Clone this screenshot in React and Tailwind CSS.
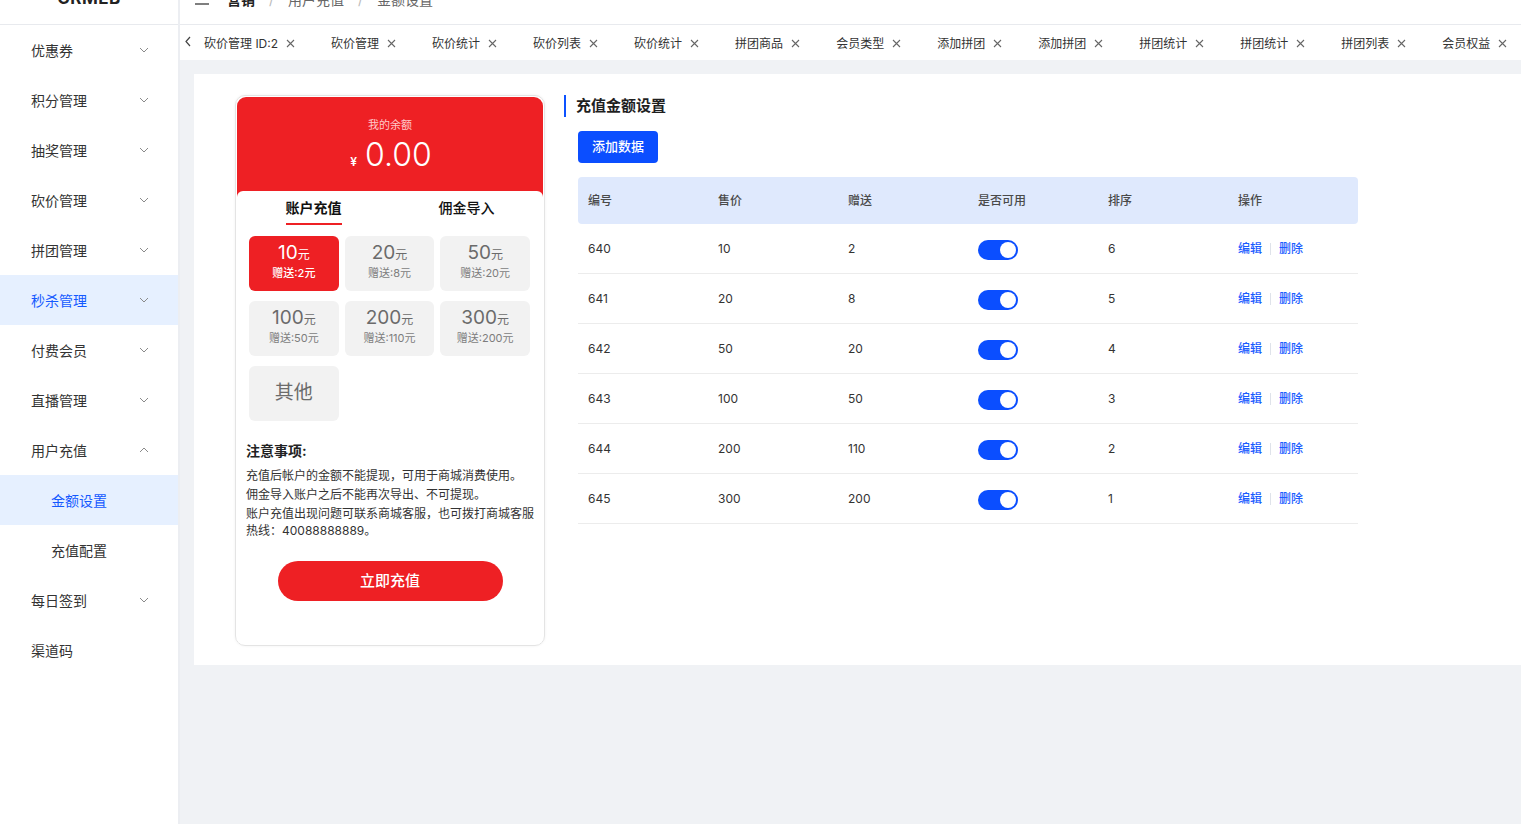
import React from 'react';

const menu = [
  { t: '优惠券', c: 'down' },
  { t: '积分管理', c: 'down' },
  { t: '抽奖管理', c: 'down' },
  { t: '砍价管理', c: 'down' },
  { t: '拼团管理', c: 'down' },
  { t: '秒杀管理', c: 'down', active: true },
  { t: '付费会员', c: 'down' },
  { t: '直播管理', c: 'down' },
  { t: '用户充值', c: 'up' },
  { t: '金额设置', sub: true, active: true },
  { t: '充值配置', sub: true },
  { t: '每日签到', c: 'down' },
  { t: '渠道码' },
];

const tabs = ['砍价管理', '砍价统计', '砍价列表', '砍价统计', '拼团商品', '会员类型', '添加拼团', '添加拼团', '拼团统计', '拼团统计', '拼团列表', '会员权益'];

const amounts = [
  { n: '10', g: '2', sel: true },
  { n: '20', g: '8' },
  { n: '50', g: '20' },
  { n: '100', g: '50' },
  { n: '200', g: '110' },
  { n: '300', g: '200' },
];

const rows = [
  ['640', '10', '2', '6'],
  ['641', '20', '8', '5'],
  ['642', '50', '20', '4'],
  ['643', '100', '50', '3'],
  ['644', '200', '110', '2'],
  ['645', '300', '200', '1'],
];

function Chevron({ up }) {
  return (
    <svg width="10" height="6" viewBox="0 0 10 6" className="text-[#8a8a8a]">
      <polyline points={up ? '1,5 5,1 9,5' : '1,1 5,5 9,1'} fill="none" stroke="currentColor" strokeWidth="1" />
    </svg>
  );
}

function Close() {
  return (
    <svg width="9" height="9" viewBox="0 0 9 9" className="text-[#666] shrink-0">
      <path d="M1 1 L8 8 M8 1 L1 8" stroke="currentColor" strokeWidth="1.1" />
    </svg>
  );
}

export default function App() {
  return (
    <div className="w-[1521px] h-[824px] overflow-hidden flex bg-[#f0f2f5] font-['Inter','Noto_Sans_CJK_SC',sans-serif] text-[#333]">
      {/* Sidebar */}
      <aside className="w-[180px] shrink-0 bg-white border-r-2 border-[#eceef2] flex flex-col">
        <div className="h-[51px] -mt-[26px] shrink-0 border-b border-[#e8eaee] flex items-center justify-center text-[17px] font-bold tracking-wide text-[#222]">
          CRMEB
        </div>
        {menu.map((m, i) => (
          <div
            key={i}
            className={`h-[50px] shrink-0 flex items-center justify-between text-[14px] ${m.sub ? 'pl-[51px]' : 'pl-[31px]'} pr-[29px] ${m.active ? 'bg-[#e6f0ff] text-[#1459ff]' : 'text-[#333]'}`}
          >
            <span>{m.t}</span>
            {m.c && <Chevron up={m.c === 'up'} />}
          </div>
        ))}
      </aside>

      {/* Main */}
      <div className="flex-1 min-w-0 flex flex-col">
        <header className="h-[51px] -mt-[26px] shrink-0 bg-white border-b border-[#e8eaee] flex items-center pl-[15px] text-[14px]">
          <svg width="14" height="12" viewBox="0 0 14 12" className="text-[#555] mr-[18px]">
            <path d="M0 1 H14 M4 6 H14 M0 11 H14" stroke="currentColor" strokeWidth="1.4" />
          </svg>
          <span className="font-semibold text-[#222]">营销</span>
          <span className="mx-[14px] text-[#bbb]">/</span>
          <span className="text-[#666]">用户充值</span>
          <span className="mx-[14px] text-[#bbb]">/</span>
          <span className="text-[#666]">金额设置</span>
        </header>

        <div className="h-[35px] shrink-0 bg-white flex items-center pt-[2px] overflow-hidden whitespace-nowrap text-[12px] text-[#333]">
          <svg width="8" height="11" viewBox="0 0 8 11" className="ml-[4px] mb-[4px] shrink-0 text-[#444]">
            <polyline points="6,1 2,5.5 6,10" fill="none" stroke="currentColor" strokeWidth="1.2" />
          </svg>
          <div className="flex items-center gap-[8px] pl-[12px] pr-[18px] shrink-0">
            <span>砍价管理 ID:2</span>
            <Close />
          </div>
          {tabs.map((t, i) => (
            <div key={i} className="flex items-center gap-[8px] px-[18px] shrink-0">
              <span>{t}</span>
              <Close />
            </div>
          ))}
        </div>

        <main className="flex-1 pt-[14px] pl-[14px]">
          <div className="bg-white flex pt-[21px] pl-[41px] pb-[19px]">
            {/* Phone preview */}
            <div className="w-[310px] h-[551px] shrink-0 rounded-[10px] border border-[#e4e4e4] shadow-[0_0_3px_rgba(0,0,0,0.06)] p-px overflow-hidden flex flex-col">
              <div className="h-[100px] shrink-0 bg-[#ee2024] rounded-t-[9px] flex flex-col items-center pt-[20px]">
                <div className="text-[11px] leading-[16px] text-[#ffc9c9]">我的余额</div>
                <div className="flex items-baseline text-white mt-[5px] pl-[2px]">
                  <span className="text-[12px] mr-[8px] font-semibold">¥</span>
                  <span className="text-[32px] leading-[34px] font-light">0.00</span>
                </div>
              </div>
              <div className="-mt-[6px] bg-white rounded-t-[6px] flex-1 flex flex-col">
                <div className="flex pt-[7px]">
                  <div className="flex-1 flex flex-col items-center">
                    <span className="text-[14px] leading-[20px] font-bold text-[#111]">账户充值</span>
                    <span className="mt-[5px] w-[56px] h-[2px] bg-[#ee2024]" />
                  </div>
                  <div className="flex-1 flex flex-col items-center">
                    <span className="text-[14px] leading-[20px] font-medium text-[#111]">佣金导入</span>
                  </div>
                </div>
                <div className="grid grid-cols-3 gap-x-[6px] gap-y-[10px] pl-[12px] pr-[13px] mt-[11px]">
                  {amounts.map((a, i) => (
                    <div
                      key={i}
                      className={`h-[55px] rounded-[6px] flex flex-col items-center justify-center pb-[5px] ${a.sel ? 'bg-[#ee2024] text-white' : 'bg-[#f2f2f2] text-[#6b6b6b]'}`}
                    >
                      <div className="flex items-baseline leading-[22px]">
                        <span className="text-[19px]">{a.n}</span>
                        <span className="text-[12px]">元</span>
                      </div>
                      <div className={`text-[11px] leading-[15px] ${a.sel ? 'font-medium' : 'text-[#7d7d7d]'}`}>赠送:{a.g}元</div>
                    </div>
                  ))}
                  <div className="h-[55px] rounded-[6px] bg-[#f2f2f2] flex items-center justify-center text-[19px] text-[#6b6b6b]">
                    其他
                  </div>
                </div>
                <div className="pl-[9px] pr-[8px] mt-[19px]">
                  <div className="text-[14px] leading-[22px] font-bold text-[#222]">注意事项:</div>
                  <div className="mt-[5px] text-[12px] leading-[18px] text-[#333] flex flex-col gap-[1px]">
                    <p>充值后帐户的金额不能提现，可用于商城消费使用。</p>
                    <p>佣金导入账户之后不能再次导出、不可提现。</p>
                    <p className="leading-[17px]">账户充值出现问题可联系商城客服，也可拨打商城客服热线：40088888889。</p>
                  </div>
                </div>
                <div className="flex justify-center mt-[22px]">
                  <button className="w-[225px] h-[40px] rounded-full bg-[#ee2024] text-white text-[15px] font-medium">
                    立即充值
                  </button>
                </div>
              </div>
            </div>

            {/* Right section */}
            <div className="ml-[19px] flex-1 min-w-0">
              <div className="flex items-center h-[22px] border-l-2 border-[#0d52ff] pl-[10px]">
                <span className="text-[15px] font-semibold text-[#1f1f1f]">充值金额设置</span>
              </div>
              <div className="pl-[14px]">
                <button className="mt-[14px] w-[80px] h-[32px] rounded-[4px] bg-[#0b4eff] text-white text-[13px] font-medium">
                  添加数据
                </button>
                <div className="mt-[14px] w-[780px] text-[12px]">
                  <div className="h-[47px] rounded-[4px] bg-[#dfe9fd] grid grid-cols-[130px_130px_130px_130px_130px_1fr] items-center pl-[10px] text-[#4a4a4a] font-medium">
                    <span>编号</span>
                    <span>售价</span>
                    <span>赠送</span>
                    <span>是否可用</span>
                    <span>排序</span>
                    <span>操作</span>
                  </div>
                  {rows.map((r, i) => (
                    <div key={i} className="h-[50px] border-b border-[#ececec] grid grid-cols-[130px_130px_130px_130px_130px_1fr] items-center pl-[10px] text-[#333]">
                      <span>{r[0]}</span>
                      <span>{r[1]}</span>
                      <span>{r[2]}</span>
                      <span className="flex">
                        <span className="w-[40px] h-[20px] rounded-full bg-[#0b4eff] flex items-center justify-end pr-[2px] mt-[3px]">
                          <span className="w-[16px] h-[16px] rounded-full bg-white" />
                        </span>
                      </span>
                      <span>{r[3]}</span>
                      <span className="flex items-center text-[#1a5cff] font-medium">
                        <span>编辑</span>
                        <span className="mx-[8px] w-px h-[12px] bg-[#dfe3ea]" />
                        <span>删除</span>
                      </span>
                    </div>
                  ))}
                </div>
              </div>
            </div>
          </div>
        </main>
      </div>
    </div>
  );
}
